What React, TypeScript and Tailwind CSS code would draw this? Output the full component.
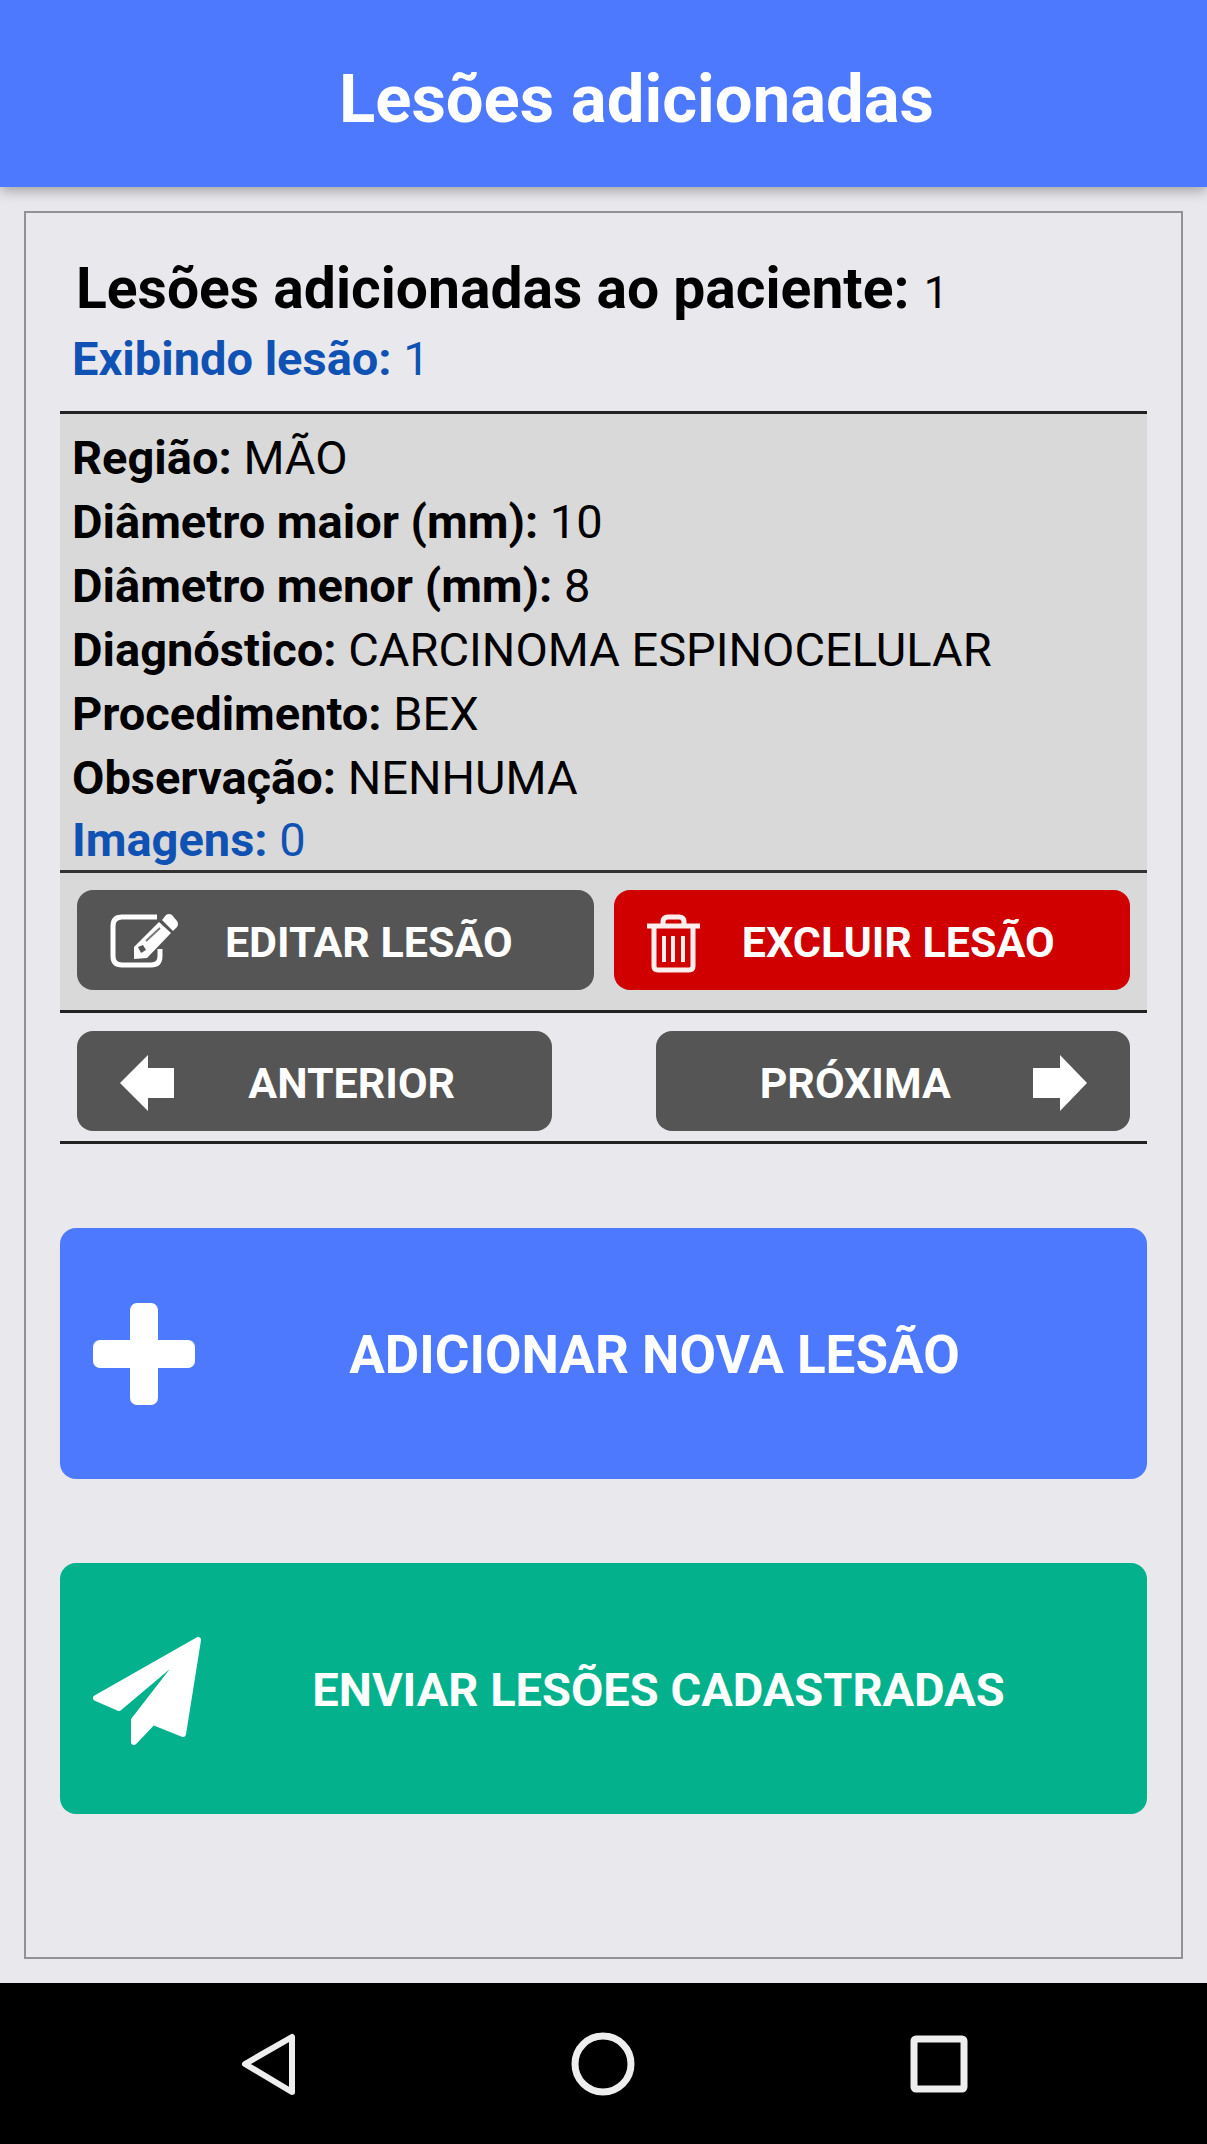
import type { ReactNode } from "react";

function EditIcon() {
  return (
    <svg viewBox="0 -4 68 60" className="h-[60px] w-[68px]" fill="none" aria-hidden="true">
      <path d="M47 3H12Q3 3 3 12V42Q3 51 12 51H41Q50 51 50 42V35" stroke="#fff" strokeWidth="5" />
      <path d="M24 33 49 8 61 19 37 44 24 45Z" fill="#fff" />
      <path d="M56 1Q59-1 62 1L67 7Q69 10 67 13L63 17 52 6Z" fill="#fff" />
      <path d="M36 27 50 14" stroke="#777" strokeWidth="2" />
      <path d="M28 33 33 31 36 36 31 39Z" fill="#555" />
    </svg>
  );
}

function TrashIcon() {
  return (
    <svg viewBox="0 -8 54 68" className="h-[68px] w-[54px]" fill="none" stroke="#ffeeee" strokeWidth="5" aria-hidden="true">
      <path d="M0 12H53M16 12V8Q16 3 21 3H32Q37 3 37 8V12" />
      <path d="M7 12V52Q7 56 11 56H42Q46 56 46 52V12" />
      <path d="M17 22V48M26 22V48M36 22V48" strokeWidth="4" />
    </svg>
  );
}

function ArrowIcon({ flip = false }: { flip?: boolean }) {
  return (
    <svg viewBox="0 -4 54 60" className="h-[60px] w-[54px]" fill="#fff" aria-hidden="true">
      {flip ? <path d="M54 28 27 0V13H0V43H27V56Z" /> : <path d="M0 28 28 0V13H54V43H28V56Z" />}
    </svg>
  );
}

function PlusIcon() {
  return (
    <svg viewBox="0 0 102 102" className="h-[102px] w-[102px]" fill="#fff" aria-hidden="true">
      <rect x="37" y="0" width="28" height="102" rx="7" />
      <rect x="0" y="37" width="102" height="28" rx="7" />
    </svg>
  );
}

function PlaneIcon() {
  return (
    <svg viewBox="0 -4 110 114" className="h-[114px] w-[110px]" fill="#fff" stroke="#fff" strokeWidth="6" strokeLinejoin="round" aria-hidden="true">
      <path d="M105 4 3 62 26 72 96 13 41 84V106L60 86 90 98Z" />
    </svg>
  );
}

function Field({ label, value }: { label: string; value: string }) {
  return (
    <div>
      <dt className="inline font-bold">{label}</dt> <dd className="inline">{value}</dd>
    </div>
  );
}

function SmallButton({ icon, label, color, end = false }: { icon: ReactNode; label: string; color: string; end?: boolean }) {
  return (
    <button type="button" className={`flex h-[100px] items-center rounded-2xl text-[43px] font-bold text-white ${color}`}>
      {!end && icon}
      <span className="flex-1 pt-1 text-center">{label}</span>
      {end && icon}
    </button>
  );
}

export default function App() {
  return (
    <div className="flex min-h-screen flex-col bg-[#e9e8ed] font-['Roboto',sans-serif] text-black">
      <header className="z-10 flex h-[187px] items-center justify-center bg-[#4d79ff] pt-3 pl-[66px] shadow-[0_4px_12px_rgba(0,0,0,0.3)]">
        <h1 className="text-[67px] font-bold text-white">Lesões adicionadas</h1>
      </header>

      <main className="mx-6 mt-6 mb-6 flex-1 border-2 border-[#929296] px-[34px]">
        <h2 className="pt-[42px] pl-4 text-[57px] leading-[68px] font-bold">
          Lesões adicionadas ao paciente: <span className="text-[44px] leading-none font-normal">1</span>
        </h2>
        <p className="pl-3 text-[47px] leading-[72px] text-[#0f52b4]">
          <b>Exibindo lesão:</b> 1
        </p>

        <section className="mt-4 border-y-[3px] border-[#222] bg-[#d9d9d9]">
          <dl className="border-b-[3px] border-[#333] pt-3 pl-3 text-[47px] leading-[64px]">
            <Field label="Região:" value="MÃO" />
            <Field label="Diâmetro maior (mm):" value="10" />
            <Field label="Diâmetro menor (mm):" value="8" />
            <Field label="Diagnóstico:" value="CARCINOMA ESPINOCELULAR" />
            <Field label="Procedimento:" value="BEX" />
            <Field label="Observação:" value="NENHUMA" />
            <div className="leading-[60px] text-[#0f52b4]">
              <dt className="inline font-bold">Imagens:</dt> <dd className="inline">0</dd>
            </div>
          </dl>
          <div className="grid grid-cols-2 gap-5 px-[17px] pt-[17px] pb-5">
            <SmallButton label="EDITAR LESÃO" color="bg-[#555] pl-[33px] pr-[34px]" icon={<EditIcon />} />
            <SmallButton label="EXCLUIR LESÃO" color="bg-[#d00000] pl-[33px] pr-[34px]" icon={<TrashIcon />} />
          </div>
        </section>

        <nav aria-label="Lesões" className="grid grid-cols-2 gap-[104px] border-b-[3px] border-[#222] px-[17px] pt-[18px] pb-[10px]">
          <SmallButton label="ANTERIOR" color="bg-[#555] pl-[43px] pr-[22px]" icon={<ArrowIcon />} />
          <SmallButton label="PRÓXIMA" color="bg-[#555] pl-[22px] pr-[43px]" icon={<ArrowIcon flip />} end />
        </nav>

        <button type="button" className="mt-[84px] flex h-[251px] w-full items-center rounded-2xl bg-[#4d79ff] px-[33px] text-[53px] font-bold text-white">
          <PlusIcon />
          <span className="flex-1 pt-1 text-center">ADICIONAR NOVA LESÃO</span>
        </button>
        <button type="button" className="mt-[84px] flex h-[251px] w-full items-center rounded-2xl bg-[#03b28c] px-[33px] text-[47px] font-bold text-white">
          <PlaneIcon />
          <span className="flex-1 pt-1 text-center">ENVIAR LESÕES CADASTRADAS</span>
        </button>
      </main>

      <footer className="grid h-[161px] grid-cols-3 place-items-center bg-black px-[100px]">
        <button type="button" aria-label="Voltar">
          <svg viewBox="0 0 64 64" className="h-16 w-16" fill="none" stroke="#eee" strokeWidth="6" strokeLinejoin="round">
            <path d="M56 5V60L9 32Z" />
          </svg>
        </button>
        <button type="button" aria-label="Início">
          <svg viewBox="0 0 64 64" className="h-16 w-16" fill="none" stroke="#eee" strokeWidth="7">
            <circle cx="32" cy="32" r="28" />
          </svg>
        </button>
        <button type="button" aria-label="Recentes">
          <svg viewBox="0 0 64 64" className="h-16 w-16" fill="none" stroke="#eee" strokeWidth="7">
            <rect x="7" y="7" width="50" height="50" rx="2" />
          </svg>
        </button>
      </footer>
    </div>
  );
}
